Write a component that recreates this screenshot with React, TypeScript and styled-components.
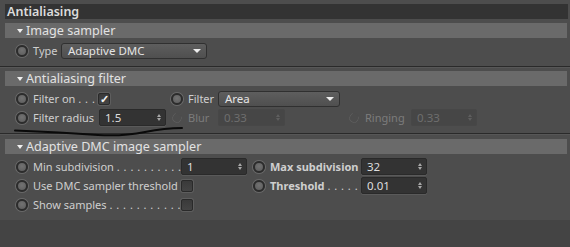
import React from "react"
import styled, { createGlobalStyle, css } from "styled-components"

const GlobalStyle = createGlobalStyle`
  html, body {
    margin: 0;
    padding: 0;
    background: #4d4d4d;
  }
  body {
    font-family: "Noto Sans", "Open Sans", Arial, sans-serif;
  }
`

const Panel = styled.div`
  width: 570px;
  height: 247px;
  background: #4d4d4d;
  display: flex;
  flex-direction: column;
  padding-top: 4px;
  box-sizing: border-box;
  position: relative;
  overflow: hidden;
`

const TitleBar = styled.div`
  height: 15px;
  margin: 0 2px 0 5px;
  background: #333333;
  color: #dcdcdc;
  font-size: 12.5px;
  font-weight: 600;
  line-height: 15px;
  padding-left: 2px;
`

const Group = styled.div<{ $last?: boolean }>`
  margin-top: ${(p) => (p.$last ? "5px" : "4px")};
  padding: 0 3px 0 0;
  ${(p) =>
    p.$last
      ? css`
          padding-bottom: 7px;
        `
      : css`
          padding-bottom: 7px;
          border-bottom: 1px solid #2a2a2a;
          box-shadow: 0 1px 0 #575757;
        `}
`

const Bar = styled.div`
  margin-left: 5px;
  height: 15px;
  background: #6a6a6a;
  color: #e2e2e2;
  font-size: 12.6px;
  line-height: 15px;
  display: flex;
  align-items: center;
  padding-left: 12px;
  gap: 2px;
`

const Caret = styled.span`
  width: 0;
  height: 0;
  border-left: 3.5px solid transparent;
  border-right: 3.5px solid transparent;
  border-top: 4px solid #f0f0f0;
  margin-right: 1px;
`

const Rows = styled.div`
  display: flex;
  flex-direction: column;
  gap: 2px;
  padding: 4px 0 0 16px;
`

const Row = styled.div`
  display: flex;
  align-items: center;
  height: 17px;
`

const Cell = styled.div<{ $w?: number }>`
  display: flex;
  align-items: center;
  gap: 5px;
  ${(p) => (p.$w ? `width: ${p.$w}px; flex: none;` : "")}
`

const Radio = styled.span<{ $off?: boolean }>`
  flex: none;
  box-sizing: border-box;
  width: 12px;
  height: 12px;
  border-radius: 50%;
  ${(p) =>
    p.$off
      ? css`
          border: 1.5px solid #5f5f5f;
          border-top-color: #4d4d4d;
          background: transparent;
          transform: scale(0.8) rotate(30deg);
        `
      : css`
          border: 2px solid #2c2c2c;
          background: radial-gradient(circle at 50% 40%, #727272, #5c5c5c);
          box-shadow: 0 0 0 1px #6a6a6a;
        `}
`

const Label = styled.span<{ $w?: number; $bold?: boolean; $off?: boolean }>`
  font-size: 11px;
  color: ${(p) => (p.$off ? "#7c7c7c" : "#cfcfcf")};
  font-weight: ${(p) => (p.$bold ? 700 : 400)};
  white-space: nowrap;
  ${(p) => (p.$w ? `width: ${p.$w}px; flex: none;` : "")}
`

const Dots = styled.span`
  font-weight: 400;
  letter-spacing: 0.5px;
`

const Select = styled.div<{ $w: number }>`
  box-sizing: border-box;
  width: ${(p) => p.$w}px;
  height: 16px;
  border: 1px solid #303030;
  border-radius: 3px;
  background: linear-gradient(#5e5e5e, #4f4f4f);
  color: #e4e4e4;
  font-size: 11.5px;
  display: flex;
  align-items: center;
  justify-content: space-between;
  padding: 0 5px 0 6px;
`

const SelectArrow = styled.span`
  width: 0;
  height: 0;
  border-left: 4px solid transparent;
  border-right: 4px solid transparent;
  border-top: 4px solid #eeeeee;
`

const Field = styled.div<{ $w: number; $off?: boolean }>`
  box-sizing: border-box;
  width: ${(p) => p.$w}px;
  height: 17px;
  border: 1px solid ${(p) => (p.$off ? "#474747" : "#2a2a2a")};
  border-radius: 2px;
  background: ${(p) => (p.$off ? "#464646" : "#333333")};
  color: ${(p) => (p.$off ? "#6e6e6e" : "#dedede")};
  font-size: 11.5px;
  display: flex;
  align-items: center;
  justify-content: space-between;
  padding: 0 4px 0 5px;
  box-shadow: ${(p) => (p.$off ? "none" : "0 1px 0 #5a5a5a")};
`

const Spin = styled.span<{ $off?: boolean }>`
  display: flex;
  flex-direction: column;
  gap: 1px;
  &::before,
  &::after {
    content: "";
    width: 0;
    height: 0;
    border-left: 2.5px solid transparent;
    border-right: 2.5px solid transparent;
  }
  &::before {
    border-bottom: 3px solid ${(p) => (p.$off ? "#5e5e5e" : "#a8a8a8")};
  }
  &::after {
    border-top: 3px solid ${(p) => (p.$off ? "#5e5e5e" : "#a8a8a8")};
  }
`

const Check = styled.span`
  flex: none;
  box-sizing: border-box;
  width: 12px;
  height: 12px;
  border: 1px solid #2a2a2a;
  border-radius: 2px;
  background: linear-gradient(#3a3a3a, #444444);
  box-shadow: 0 0 0 1px #5e5e5e;
  color: #f4f4f4;
  font-size: 11px;
  font-weight: 700;
  line-height: 10px;
  text-align: center;
`

const Footer = styled.div`
  flex: 1;
  background: #444444;
`

const Scribble = styled.svg`
  position: absolute;
  left: 0;
  top: 0;
  pointer-events: none;
`

const NumField = ({ w, value, off }: { w: number; value: string; off?: boolean }) => (
  <Field $w={w} $off={off}>
    <span>{value}</span>
    <Spin $off={off} />
  </Field>
)

export default function App() {
  return (
    <>
      <GlobalStyle />
      <Panel>
        <TitleBar>Antialiasing</TitleBar>

        <Group>
          <Bar>
            <Caret />
            Image sampler
          </Bar>
          <Rows>
            <Row>
              <Cell>
                <Radio />
                <Label $w={23}>Type</Label>
                <Select $w={146}>
                  <span>Adaptive DMC</span>
                  <SelectArrow />
                </Select>
              </Cell>
            </Row>
          </Rows>
        </Group>

        <Group>
          <Bar>
            <Caret />
            Antialiasing filter
          </Bar>
          <Rows>
            <Row>
              <Cell $w={155}>
                <Radio />
                <Label $w={60}>
                  Filter on <Dots>. . .</Dots>
                </Label>
                <Check>✓</Check>
              </Cell>
              <Cell>
                <Radio />
                <Label $w={25}>Filter</Label>
                <Select $w={122}>
                  <span>Area</span>
                  <SelectArrow />
                </Select>
              </Cell>
            </Row>
            <Row>
              <Cell $w={155}>
                <Radio />
                <Label $w={61}>Filter radius</Label>
                <NumField w={67} value="1.5" />
              </Cell>
              <Cell $w={177}>
                <Radio $off />
                <Label $w={25} $off>
                  Blur
                </Label>
                <NumField w={67} value="0.33" off />
              </Cell>
              <Cell>
                <Radio $off />
                <Label $w={41} $off>
                  Ringing
                </Label>
                <NumField w={66} value="0.33" off />
              </Cell>
            </Row>
          </Rows>
        </Group>

        <Group $last>
          <Bar>
            <Caret />
            Adaptive DMC image sampler
          </Bar>
          <Rows>
            <Row>
              <Cell $w={237}>
                <Radio />
                <Label $w={143}>
                  Min subdivision <Dots>. . . . . . . . . .</Dots>
                </Label>
                <NumField w={66} value="1" />
              </Cell>
              <Cell>
                <Radio />
                <Label $w={86} $bold>
                  Max subdivision
                </Label>
                <NumField w={66} value="32" />
              </Cell>
            </Row>
            <Row>
              <Cell $w={237}>
                <Radio />
                <Label $w={143}>Use DMC sampler threshold</Label>
                <Check />
              </Cell>
              <Cell>
                <Radio />
                <Label $w={86} $bold>
                  Threshold <Dots>. . . . .</Dots>
                </Label>
                <NumField w={66} value="0.01" />
              </Cell>
            </Row>
            <Row>
              <Cell>
                <Radio />
                <Label $w={143}>
                  Show samples <Dots>. . . . . . . . . . . .</Dots>
                </Label>
                <Check />
              </Cell>
            </Row>
          </Rows>
        </Group>

        <Footer />

        <Scribble width="570" height="247">
          <path
            d="M15 130.5 C40 131.5 70 133 98 135 C115 136 130 135 145 132 C160 129 172 128 182 128"
            fill="none"
            stroke="#0a0a0a"
            strokeWidth="2"
            strokeLinecap="round"
          />
        </Scribble>
      </Panel>
    </>
  )
}
